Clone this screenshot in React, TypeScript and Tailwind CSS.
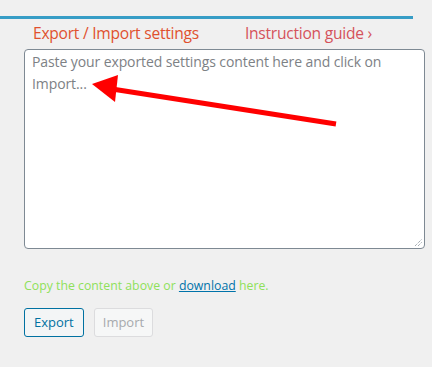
import React from 'react';

const Arrow: React.FC = () => (
  <svg className="absolute left-0 top-0 pointer-events-none" width="432" height="367" viewBox="0 0 432 367">
    <line x1="336" y1="124" x2="112" y2="89" stroke="#ff0000" strokeWidth="5" />
    <polygon points="92,84 118,75 115,102" fill="#ff0000" />
  </svg>
);

export default function App() {
  return (
    <div className="relative w-[432px] h-[367px] bg-[#f0f0f0] overflow-hidden font-['Open_Sans','Noto_Sans',sans-serif]">
      <div className="pt-[16px]">
        <div className="w-[413px] h-[3px] bg-[#379dc6]" />
      </div>

      <div className="flex items-center pl-[33px] pt-[4px] h-[26px] text-[15.6px] leading-none">
        <span className="text-[#e0502e] tracking-[-0.25px]">Export / Import settings</span>
        <span className="ml-[46px] text-[#d5525b] tracking-[-0.25px]">Instruction guide ›</span>
      </div>

      <div className="pl-[24px] pt-[4px]">
        <div className="relative w-[401px] h-[200px] rounded-[4px] border border-[#7e8993] bg-white">
          <p className="pl-[7px] pr-[20px] pt-[1px] text-[14px] leading-[22px] tracking-[-0.1px] text-[#7d8185]">
            Paste your exported settings content here and click on Import...
          </p>
          <svg className="absolute right-[1px] bottom-[1px]" width="9" height="9" viewBox="0 0 9 9">
            <line x1="1" y1="8" x2="8" y2="1" stroke="#7e8993" strokeWidth="1" strokeDasharray="1 1" />
            <line x1="4" y1="8" x2="8" y2="4" stroke="#7e8993" strokeWidth="1" strokeDasharray="1 1" />
          </svg>
        </div>
      </div>

      <p className="pl-[24px] pt-[28px] text-[12.3px] leading-[18px] text-[#8ee05a]">
        Copy the content above or <span className="text-[#0073aa] underline">download</span> here.
      </p>

      <div className="flex gap-[10px] pl-[24px] pt-[13px]">
        <button className="h-[29px] px-[9px] rounded-[3px] border border-[#0071a1] bg-[#f3f5f6] text-[#0071a1] text-[13px] leading-none">
          Export
        </button>
        <button className="h-[29px] px-[8px] rounded-[3px] border border-[#dcdcde] bg-[#f6f7f7] text-[#a7aaad] text-[13px] leading-none">
          Import
        </button>
      </div>

      <Arrow />
    </div>
  );
}
